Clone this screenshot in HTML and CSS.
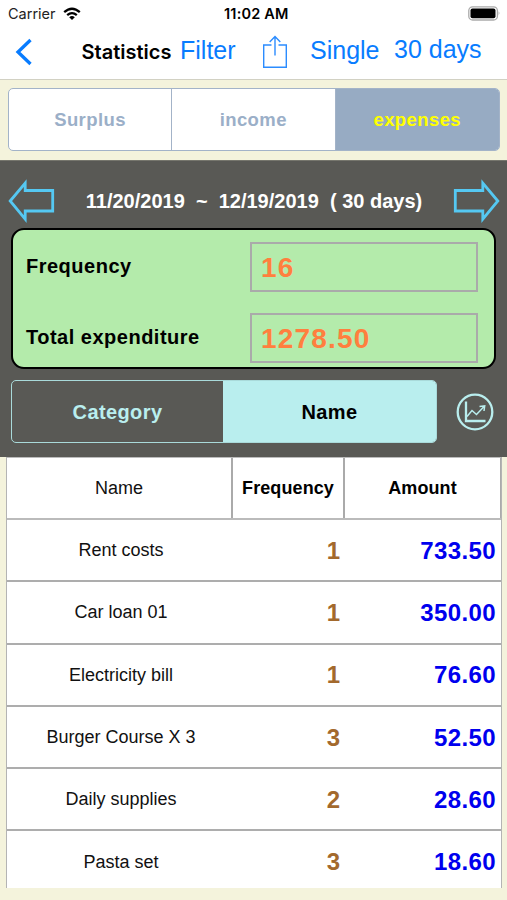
FILE: index.html
```html
<!DOCTYPE html>
<html lang="en">
<head>
<meta charset="utf-8">
<title>Statistics</title>
<link rel="stylesheet" href="styles.css">
</head>
<body>
<header class="top">
  <div class="status">
    <div class="carrier"><span>Carrier</span>
      <svg width="18" height="14" viewBox="0 0 18 14" fill="none" stroke="#000" stroke-width="2.3"><path d="M1.2 5.2Q9-1.7 16.8 5.2M4.2 8.2Q9 4.1 13.8 8.2"/><path d="M6.2 10.2Q9 8 11.8 10.2L9 13z" fill="#000" stroke="none"/></svg>
    </div>
    <time class="clock">11:02 AM</time>
    <svg class="battery" width="33" height="15" viewBox="0 0 33 15"><rect x=".8" y=".8" width="28.6" height="13.2" rx="3.8" fill="#fff" stroke="#aaa" stroke-width="1.3"/><rect x="2.5" y="2.5" width="25" height="9.8" rx="2" fill="#000"/><path d="M30.7 5.2q1.8 2.2 0 4.4z" fill="#999"/></svg>
  </div>
  <nav class="nav">
    <svg class="back" width="18" height="28" viewBox="0 0 18 28" fill="none" stroke="#087cff" stroke-width="3.3"><path d="M15.5 2 3 14l12.5 12"/></svg>
    <h1 class="title">Statistics</h1>
    <a class="link filter">Filter</a>
    <svg class="share" width="26" height="34" viewBox="0 0 26 34" fill="none" stroke="#2b8cff" stroke-width="1.4"><path d="M9.5 10H1.7v22.2h22.6V10h-7.8M13 20.5V1.8M7.7 7 13 1.5 18.3 7"/></svg>
    <a class="link single">Single</a>
    <a class="link days">30 days</a>
  </nav>
</header>
<div class="kinds">
  <div class="kind">Surplus</div>
  <div class="kind">income</div>
  <div class="kind active">expenses</div>
</div>
<section class="panel">
  <div class="period">
    <svg width="47" height="46" viewBox="0 0 47 46" fill="none" stroke="#55c8f2" stroke-width="2.8"><path d="M2.2 23 17.2 5V12.5H44.7V33H17.2V41.2z"/></svg>
    <span class="range">11/20/2019&nbsp; ~&nbsp; 12/19/2019&nbsp; ( 30 days)</span>
    <svg width="47" height="46" viewBox="0 0 47 46" fill="none" stroke="#55c8f2" stroke-width="2.8"><path d="M44.8 23 29.8 5V12.5H2.3V33H29.8V41.2z"/></svg>
  </div>
  <div class="summary">
    <div class="label">Frequency</div><div class="field">16</div>
    <div class="label">Total expenditure</div><div class="field">1278.50</div>
  </div>
  <div class="controls">
    <div class="modes"><div class="mode">Category</div><div class="mode selected">Name</div></div>
    <svg width="38" height="38" viewBox="0 0 38 38" fill="none" stroke="#b9eeee"><circle cx="19" cy="19" r="17.3" stroke-width="2.3"/><path d="M10 8.5V28H29.5" stroke-width="2.3"/><path d="M11 23.5 16 17.5 20.5 21.5 28.5 13M23.5 13.5 28.7 12.8 28 18" stroke-width="1.5"/></svg>
  </div>
</section>
<main class="table">
  <div class="row head"><div class="name">Name</div><div class="count">Frequency</div><div class="amount">Amount</div></div>
  <div class="row"><div class="name">Rent costs</div><div class="count">1</div><div class="amount">733.50</div></div>
  <div class="row"><div class="name">Car loan 01</div><div class="count">1</div><div class="amount">350.00</div></div>
  <div class="row"><div class="name">Electricity bill</div><div class="count">1</div><div class="amount">76.60</div></div>
  <div class="row"><div class="name">Burger Course X 3</div><div class="count">3</div><div class="amount">52.50</div></div>
  <div class="row"><div class="name">Daily supplies</div><div class="count">2</div><div class="amount">28.60</div></div>
  <div class="row"><div class="name">Pasta set</div><div class="count">3</div><div class="amount">18.60</div></div>
</main>
</body>
</html>
```
FILE: styles.css
```css
* { box-sizing: border-box; }
body { margin: 0; width: 507px; height: 900px; overflow: hidden; background: #f4f3dc; font-family: "Liberation Sans", Arial, sans-serif; color: #000; }
svg { display: block; flex: none; }
.top { height: 80px; background: #fff; border-bottom: 1px solid #d2d1c3; }
.status { height: 27px; display: grid; grid-template-columns: 216px auto 1fr; align-items: center; padding: 0 6px 0 8px; font: 14.5px/27px Inter, sans-serif; }
.carrier { display: flex; align-items: center; gap: 7px; color: #222; }
.clock { font-weight: 600; letter-spacing: .2px; }
.battery { justify-self: end; }
.nav { height: 52px; display: flex; align-items: flex-start; padding-left: 15px; white-space: nowrap; }
.back { margin-top: 11px; width: 18px; }
.title { margin: 12px 0 0 48.5px; width: 99.5px; font: 600 20px/26px Inter, sans-serif; letter-spacing: 0; }
.link { color: #087cff; font-size: 25px; line-height: 28px; margin-top: 9px; }
.filter { width: 80px; margin-left: -1px; }
.share { margin: 8px 0 0 2px; }
.single { margin-left: 22px; width: 84px; }
.days { margin-top: 8px; }
.kinds { height: 63px; margin: 8px 7px 9px 8px; display: grid; grid-template-columns: 163px 163.5px 1fr; border: 1.5px solid #a3b3c8; border-radius: 5px; overflow: hidden; background: #fff; }
.kind { display: flex; align-items: center; justify-content: center; color: #9bafc8; font-weight: bold; font-size: 18.5px; letter-spacing: .4px; border-right: 1px solid #a3b3c8; padding-top: 1px; }
.kind.active { background: #97abc3; color: #ff0; border: 0; }
.panel { height: 297px; background: #595955; padding: 17px 7px 0 8px; border-top: 1px solid #76766d; }
.period { height: 46px; display: flex; align-items: center; justify-content: space-between; }
.range { color: #fff; font-size: 20px; font-weight: bold; white-space: nowrap; padding-top: 1px; }
.summary { height: 141px; margin: 4px 4px 0 3px; border: 2px solid #000; border-radius: 13px; background: #b4ebab; display: grid; grid-template-columns: 237px 228px; grid-template-rows: 50px 50px; row-gap: 20.5px; padding: 12px 0 0 0; }
.label { padding-left: 13px; font-size: 20px; font-weight: bold; letter-spacing: .5px; line-height: 48px; }
.field { border: 2px solid #aaa; padding-left: 9px; color: #ff7f3e; font-size: 28px; font-weight: bold; letter-spacing: 1.2px; line-height: 47px; }
.controls { display: flex; align-items: center; gap: 19px; margin: 11px 3px 0; }
.modes { width: 426px; height: 63px; display: grid; grid-template-columns: 211px 1fr; border: 1.3px solid #a9dada; border-radius: 5px; overflow: hidden; }
.mode { display: flex; align-items: center; justify-content: center; font-weight: bold; font-size: 20px; letter-spacing: .4px; color: #b9eeee; padding-top: 1px; }
.mode.selected { background: #b9eeee; color: #000; }
.table { margin: 0 5px 0 6px; height: 431px; overflow: hidden; border: 1px solid #b4b4b4; border-width: 0 1.5px; background: #fff; }
.row { height: 62.3px; display: grid; grid-template-columns: 228px 109px 1fr; align-items: center; border-bottom: 2px solid #adadad; }
.name { text-align: center; font-size: 18px; color: #111; padding-top: 1px; }
.count { color: #a3692d; font-size: 24px; font-weight: bold; text-align: right; padding: 1px 4px 0 0; }
.amount { color: #00e; font-size: 24px; font-weight: bold; text-align: right; letter-spacing: .4px; padding: 1px 5px 0 0; }
.head { height: 63px; border-top: 1px solid #bbb; border-bottom-color: #bbb; grid-template-columns: 224px 112px 1fr; align-items: stretch; line-height: 59px; }
.head .count, .head .amount { color: #000; font-size: 18px; text-align: center; padding: 1px 0 0; letter-spacing: .1px; border-left: 2px solid #aaa; }
.head .amount { border-right: 1px solid #aaa; }
```
